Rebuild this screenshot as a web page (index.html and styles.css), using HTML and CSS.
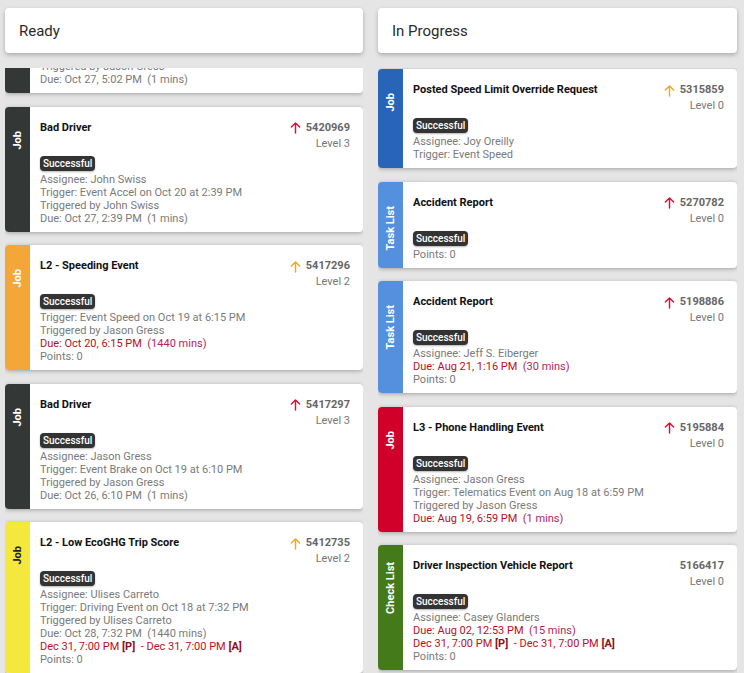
FILE: index.html
```html
<!DOCTYPE html>
<html lang="en">
<head>
  <meta charset="UTF-8">
  <meta name="viewport" content="width=device-width, initial-scale=1.0">
  <title>Workflow Board</title>
  <link rel="stylesheet" href="styles.css">
</head>
<body>
  <div class="board">

    <!-- Colonne Ready -->
    <section class="column">
      <div class="column-header">Ready</div>
      <div class="list scrolled">
        <div class="card">
          <div class="strip dark"><span class="strip-label">Job</span></div>
          <div class="card-body">
            <div class="card-top">
              <div class="card-title">Bad Driver</div>
              <div class="card-meta">
                <div class="card-num"><svg class="arrow high" viewBox="0 0 12 14"><path d="M6 13V2M1.5 6.5L6 2l4.5 4.5"/></svg>5421004</div>
                <div class="card-level">Level 3</div>
              </div>
            </div>
            <span class="badge">Successful</span>
            <div class="line">Assignee: Jason Gress</div>
            <div class="line">Trigger: Event Accel on Oct 20 at 5:02 PM</div>
            <div class="line">Triggered by Jason Gress</div>
            <div class="line">Due: Oct 27, 5:02 PM &nbsp;(1 mins)</div>
          </div>
        </div>

        <div class="card">
          <div class="strip dark"><span class="strip-label">Job</span></div>
          <div class="card-body">
            <div class="card-top">
              <div class="card-title">Bad Driver</div>
              <div class="card-meta">
                <div class="card-num"><svg class="arrow high" viewBox="0 0 12 14"><path d="M6 13V2M1.5 6.5L6 2l4.5 4.5"/></svg>5420969</div>
                <div class="card-level">Level 3</div>
              </div>
            </div>
            <span class="badge">Successful</span>
            <div class="line">Assignee: John Swiss</div>
            <div class="line">Trigger: Event Accel on Oct 20 at 2:39 PM</div>
            <div class="line">Triggered by John Swiss</div>
            <div class="line">Due: Oct 27, 2:39 PM &nbsp;(1 mins)</div>
          </div>
        </div>

        <div class="card">
          <div class="strip orange"><span class="strip-label">Job</span></div>
          <div class="card-body">
            <div class="card-top">
              <div class="card-title">L2 - Speeding Event</div>
              <div class="card-meta">
                <div class="card-num"><svg class="arrow medium" viewBox="0 0 12 14"><path d="M6 13V2M1.5 6.5L6 2l4.5 4.5"/></svg>5417296</div>
                <div class="card-level">Level 2</div>
              </div>
            </div>
            <span class="badge">Successful</span>
            <div class="line">Trigger: Event Speed on Oct 19 at 6:15 PM</div>
            <div class="line">Triggered by Jason Gress</div>
            <div class="line late">Due: Oct 20, 6:15 PM &nbsp;<span class="mins">(1440 mins)</span></div>
            <div class="line">Points: 0</div>
          </div>
        </div>

        <div class="card">
          <div class="strip dark"><span class="strip-label">Job</span></div>
          <div class="card-body">
            <div class="card-top">
              <div class="card-title">Bad Driver</div>
              <div class="card-meta">
                <div class="card-num"><svg class="arrow high" viewBox="0 0 12 14"><path d="M6 13V2M1.5 6.5L6 2l4.5 4.5"/></svg>5417297</div>
                <div class="card-level">Level 3</div>
              </div>
            </div>
            <span class="badge">Successful</span>
            <div class="line">Assignee: Jason Gress</div>
            <div class="line">Trigger: Event Brake on Oct 19 at 6:10 PM</div>
            <div class="line">Triggered by Jason Gress</div>
            <div class="line">Due: Oct 26, 6:10 PM &nbsp;(1 mins)</div>
          </div>
        </div>

        <div class="card">
          <div class="strip yellow"><span class="strip-label">Job</span></div>
          <div class="card-body">
            <div class="card-top">
              <div class="card-title">L2 - Low EcoGHG Trip Score</div>
              <div class="card-meta">
                <div class="card-num"><svg class="arrow medium" viewBox="0 0 12 14"><path d="M6 13V2M1.5 6.5L6 2l4.5 4.5"/></svg>5412735</div>
                <div class="card-level">Level 2</div>
              </div>
            </div>
            <span class="badge">Successful</span>
            <div class="line">Assignee: Ulises Carreto</div>
            <div class="line">Trigger: Driving Event on Oct 18 at 7:32 PM</div>
            <div class="line">Triggered by Ulises Carreto</div>
            <div class="line">Due: Oct 28, 7:32 PM &nbsp;(1440 mins)</div>
            <div class="line late">Dec 31, 7:00 PM <b>[P]</b> &nbsp;- Dec 31, 7:00 PM <b>[A]</b></div>
            <div class="line">Points: 0</div>
          </div>
        </div>
      </div>
    </section>

    <!-- Colonne In Progress -->
    <section class="column">
      <div class="column-header">In Progress</div>
      <div class="list">
        <div class="card">
          <div class="strip blue"><span class="strip-label">Job</span></div>
          <div class="card-body">
            <div class="card-top">
              <div class="card-title">Posted Speed Limit Override Request</div>
              <div class="card-meta">
                <div class="card-num"><svg class="arrow medium" viewBox="0 0 12 14"><path d="M6 13V2M1.5 6.5L6 2l4.5 4.5"/></svg>5315859</div>
                <div class="card-level">Level 0</div>
              </div>
            </div>
            <span class="badge">Successful</span>
            <div class="line">Assignee: Joy Oreilly</div>
            <div class="line">Trigger: Event Speed</div>
          </div>
        </div>

        <div class="card">
          <div class="strip light-blue"><span class="strip-label">Task List</span></div>
          <div class="card-body">
            <div class="card-top">
              <div class="card-title">Accident Report</div>
              <div class="card-meta">
                <div class="card-num"><svg class="arrow high" viewBox="0 0 12 14"><path d="M6 13V2M1.5 6.5L6 2l4.5 4.5"/></svg>5270782</div>
                <div class="card-level">Level 0</div>
              </div>
            </div>
            <span class="badge">Successful</span>
            <div class="line">Points: 0</div>
          </div>
        </div>

        <div class="card">
          <div class="strip light-blue"><span class="strip-label">Task List</span></div>
          <div class="card-body">
            <div class="card-top">
              <div class="card-title">Accident Report</div>
              <div class="card-meta">
                <div class="card-num"><svg class="arrow high" viewBox="0 0 12 14"><path d="M6 13V2M1.5 6.5L6 2l4.5 4.5"/></svg>5198886</div>
                <div class="card-level">Level 0</div>
              </div>
            </div>
            <span class="badge">Successful</span>
            <div class="line">Assignee: Jeff S. Eiberger</div>
            <div class="line late">Due: Aug 21, 1:16 PM &nbsp;<span class="mins">(30 mins)</span></div>
            <div class="line">Points: 0</div>
          </div>
        </div>

        <div class="card">
          <div class="strip red"><span class="strip-label">Job</span></div>
          <div class="card-body">
            <div class="card-top">
              <div class="card-title">L3 - Phone Handling Event</div>
              <div class="card-meta">
                <div class="card-num"><svg class="arrow high" viewBox="0 0 12 14"><path d="M6 13V2M1.5 6.5L6 2l4.5 4.5"/></svg>5195884</div>
                <div class="card-level">Level 0</div>
              </div>
            </div>
            <span class="badge">Successful</span>
            <div class="line">Assignee: Jason Gress</div>
            <div class="line">Trigger: Telematics Event on Aug 18 at 6:59 PM</div>
            <div class="line">Triggered by Jason Gress</div>
            <div class="line late">Due: Aug 19, 6:59 PM &nbsp;<span class="mins">(1 mins)</span></div>
          </div>
        </div>

        <div class="card">
          <div class="strip green check"><span class="strip-label">Check List</span></div>
          <div class="card-body">
            <div class="card-top">
              <div class="card-title">Driver Inspection Vehicle Report</div>
              <div class="card-meta">
                <div class="card-num">5166417</div>
                <div class="card-level">Level 0</div>
              </div>
            </div>
            <span class="badge">Successful</span>
            <div class="line">Assignee: Casey Glanders</div>
            <div class="line late">Due: Aug 02, 12:53 PM &nbsp;<span class="mins">(15 mins)</span></div>
            <div class="line late">Dec 31, 7:00 PM <b>[P]</b> &nbsp;- Dec 31, 7:00 PM <b>[A]</b></div>
            <div class="line">Points: 0</div>
          </div>
        </div>
      </div>
    </section>

  </div>
</body>
</html>
```

FILE: styles.css
```css
html, body { height: 100%; }
body { margin: 0; background-color: #e4e5e4; font-family: Roboto, "Liberation Sans", Arial, sans-serif; color: #333; overflow: hidden; }
.board { display: grid; grid-template-columns: 358px 359px; column-gap: 15px; padding: 8px 7px 0 5px; height: 100%; box-sizing: border-box; }
.column { display: flex; flex-direction: column; min-height: 0; }
.column-header { flex: none; height: 45px; display: flex; align-items: center; padding: 0 14px; background-color: #fff; border-radius: 4px; box-shadow: 0 2px 4px rgba(0,0,0,0.25); font-size: 15px; color: #2a2a2a; margin-bottom: 15px; }
.list { flex: 1; min-height: 0; overflow: hidden; display: flex; flex-direction: column; gap: 13.5px; padding: 1px 0 20px; }
.list.scrolled .card:first-child { margin-top: -101px; }

.card { flex: none; display: flex; background-color: #fff; border-radius: 4px; overflow: hidden; box-shadow: 0 1px 4px rgba(0,0,0,0.3); }
.strip { flex: none; width: 25px; display: flex; justify-content: center; align-items: flex-start; padding-top: 24px; box-sizing: border-box; }
.strip.check { padding-top: 17px; }
.strip-label { writing-mode: vertical-rl; transform: rotate(180deg); color: #fff; font-size: 11px; font-weight: 700; line-height: 14px; white-space: nowrap; }
.dark { background-color: #333735; }
.orange { background-color: #f4a639; }
.yellow { background-color: #f5e83c; }
.yellow .strip-label { color: #222; }
.blue { background-color: #2865b8; }
.light-blue { background-color: #5590df; }
.red { background-color: #d0002a; }
.green { background-color: #457a1b; }

.card-body { flex: 1; min-width: 0; padding: 13px 13px 7px 10px; font-size: 11px; }
.card-top { display: flex; justify-content: space-between; align-items: flex-start; }
.card-title { font-weight: 700; color: #111; line-height: 16px; }
.card-meta { text-align: right; line-height: 16px; }
.card-num { display: flex; align-items: center; justify-content: flex-end; font-weight: 700; color: #666; }
.card-level { color: #777; }
.arrow { width: 11px; height: 13px; margin-right: 5px; fill: none; stroke-width: 1.6; stroke-linecap: round; stroke-linejoin: round; }
.arrow.high { stroke: #d4143c; }
.arrow.medium { stroke: #f5a623; }

.badge { display: inline-block; margin: 4px 0 2px; padding: 0 3px; height: 15px; line-height: 15px; border-radius: 4px; background-color: #333; color: #fff; font-size: 10px; font-weight: 500; box-shadow: 0 1px 2px rgba(0,0,0,0.3); }
.line { color: #7a7a7a; line-height: 13px; white-space: nowrap; }
.late { color: #b8101e; }
.late .mins { color: #b0285e; }
.late b { color: #8e1020; }
```
